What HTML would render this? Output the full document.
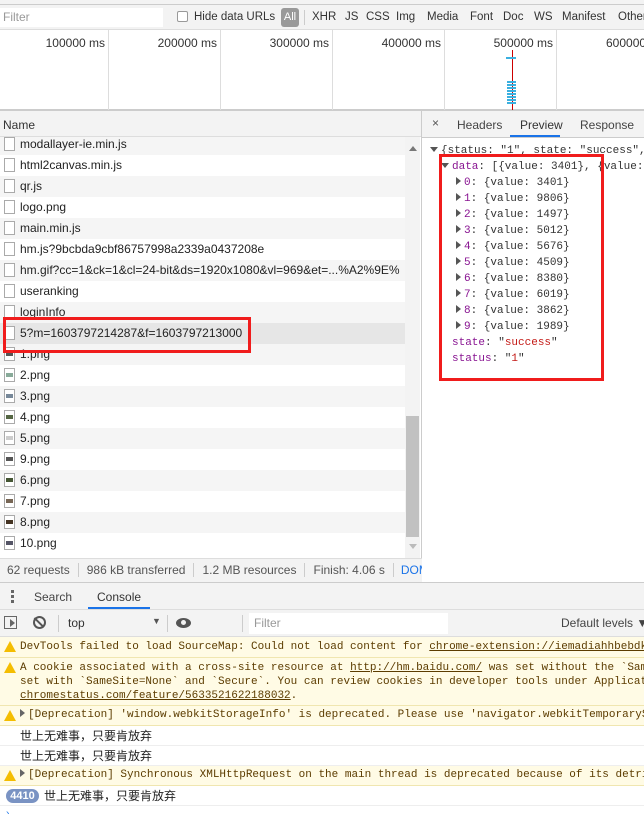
<!DOCTYPE html>
<html style="overflow:hidden"><head><meta charset="utf-8"><style>
*{box-sizing:border-box;margin:0;padding:0}
body{width:644px;height:814px;overflow:hidden;background:#fff;font-family:"Liberation Sans","Noto Sans CJK SC",sans-serif;font-size:12px;color:#333;position:relative}
.a{position:absolute}
.mono{font-family:"Liberation Mono","Noto Sans CJK SC",monospace;font-size:11px}
.row{position:absolute;left:0;width:405px;height:21px;line-height:21px;padding-left:20px;white-space:nowrap;overflow:hidden;font-size:12px;color:#222}
.row i{position:absolute;left:4px;top:3px;width:11px;height:14px;border:1px solid #aaa;background:#fff}
.row b{position:absolute;left:6px;top:8px;width:7px;height:4px;background:#555}
.g{background:#f5f5f5}
.jl{position:absolute;left:0;height:16px;line-height:16px;white-space:nowrap}
.pu{color:#881391}.rd{color:#c41a16}
.tri{display:inline-block;width:0;height:0;border-left:5px solid #555;border-top:4px solid transparent;border-bottom:4px solid transparent;margin-right:3px}
.trd{display:inline-block;width:0;height:0;border-top:5px solid #555;border-left:4px solid transparent;border-right:4px solid transparent;margin-right:3px;vertical-align:1px}
.msg{position:absolute;left:0;width:644px;border-bottom:1px solid #f0e6b0;background:#fffbe5;color:#5c3c00;padding-left:20px;white-space:nowrap;overflow:hidden;line-height:14px;padding-top:3px}
.warn{position:absolute;left:4px;top:4px;width:0;height:0;border-left:6px solid transparent;border-right:6px solid transparent;border-bottom:11px solid #f4bd00}
.log{position:absolute;left:0;width:644px;height:20px;line-height:20px;border-bottom:1px solid #eee;padding-left:20px;font-size:12px;color:#222}
.ft{position:absolute;top:8px;line-height:19px;white-space:nowrap;font-size:11.5px}
u{text-decoration:underline}
</style></head><body>
<div class="a" style="left:0;top:0;width:644px;height:5px;background:#f3f3f3;border-bottom:1px solid #ccc"></div>
<div class="a" style="left:0;top:5px;width:644px;height:25px;background:#f3f3f3;border-bottom:1px solid #ddd;overflow:hidden">
<div class="a" style="left:0;top:3px;width:163px;height:19px;background:#fff;color:#999;padding-left:3px;line-height:19px">Filter</div>
</div>
<div class="a" style="left:177px;top:11px;width:11px;height:11px;border:1px solid #999;border-radius:2px;background:#fff"></div>
<div class="ft" style="left:194px">Hide data URLs</div>
<div class="a" style="left:281px;top:8px;width:18px;height:19px;background:#999;border-radius:3px;color:#fff;line-height:19px;text-align:center;font-size:11px">All</div>
<div class="a" style="left:304px;top:10px;width:1px;height:15px;background:#ccc"></div>
<div class="ft" style="left:312px">XHR</div>
<div class="ft" style="left:345px">JS</div>
<div class="ft" style="left:366px">CSS</div>
<div class="ft" style="left:396px">Img</div>
<div class="ft" style="left:427px">Media</div>
<div class="ft" style="left:470px">Font</div>
<div class="ft" style="left:503px">Doc</div>
<div class="ft" style="left:534px">WS</div>
<div class="ft" style="left:562px">Manifest</div>
<div class="ft" style="left:618px">Other</div>
<div class="a" style="left:0;top:30px;width:644px;height:81px;background:#fff;border-bottom:2px solid #ccc"></div>
<div class="a" style="left:108px;top:30px;width:1px;height:80px;background:#ddd"></div>
<div class="a" style="left:220px;top:30px;width:1px;height:80px;background:#ddd"></div>
<div class="a" style="left:332px;top:30px;width:1px;height:80px;background:#ddd"></div>
<div class="a" style="left:444px;top:30px;width:1px;height:80px;background:#ddd"></div>
<div class="a" style="left:556px;top:30px;width:1px;height:80px;background:#ddd"></div>
<div class="a" style="left:0;top:36px;width:105px;text-align:right">100000 ms</div>
<div class="a" style="left:112px;top:36px;width:105px;text-align:right">200000 ms</div>
<div class="a" style="left:224px;top:36px;width:105px;text-align:right">300000 ms</div>
<div class="a" style="left:336px;top:36px;width:105px;text-align:right">400000 ms</div>
<div class="a" style="left:448px;top:36px;width:105px;text-align:right">500000 ms</div>
<div class="a" style="left:606px;top:36px;white-space:nowrap">600000 ms</div>
<div class="a" style="left:512px;top:50px;width:1px;height:60px;background:#c00"></div>
<div class="a" style="left:506px;top:57px;width:10px;height:2px;background:#3ab0e0"></div>
<div class="a" style="left:507px;top:81px;width:9px;height:23px;background:repeating-linear-gradient(#3ab0e0 0 2px,transparent 2px 3px)"></div>
<div class="a" style="left:0;top:111px;width:422px;height:26px;background:#f3f3f3;border-bottom:1px solid #ddd;line-height:28px;padding-left:3px">Name</div>
<div class="a" style="left:0;top:137px;width:422px;height:421px;overflow:hidden;background:#fff">
 <div class="row g" style="top:-3px"><i></i>modallayer-ie.min.js</div>
 <div class="row" style="top:18px"><i></i>html2canvas.min.js</div>
 <div class="row g" style="top:39px"><i></i>qr.js</div>
 <div class="row" style="top:60px"><i></i>logo.png</div>
 <div class="row g" style="top:81px"><i></i>main.min.js</div>
 <div class="row" style="top:102px"><i></i>hm.js?9bcbda9cbf86757998a2339a0437208e</div>
 <div class="row g" style="top:123px"><i></i>hm.gif?cc=1&amp;ck=1&amp;cl=24-bit&amp;ds=1920x1080&amp;vl=969&amp;et=...%A2%9E%</div>
 <div class="row" style="top:144px"><i></i>useranking</div>
 <div class="row g" style="top:165px"><i></i>loginInfo</div>
 <div class="row" style="top:186px;background:#e6e6e6"><i></i>5?m=1603797214287&amp;f=1603797213000</div>
 <div class="row g" style="top:207px"><i></i><b></b>1.png</div>
 <div class="row" style="top:228px"><i></i><b style="background:#8a9"></b>2.png</div>
 <div class="row g" style="top:249px"><i></i><b style="background:#789"></b>3.png</div>
 <div class="row" style="top:270px"><i></i><b style="background:#564"></b>4.png</div>
 <div class="row g" style="top:291px"><i></i><b style="background:#ccc"></b>5.png</div>
 <div class="row" style="top:312px"><i></i><b></b>9.png</div>
 <div class="row g" style="top:333px"><i></i><b style="background:#453"></b>6.png</div>
 <div class="row" style="top:354px"><i></i><b style="background:#765"></b>7.png</div>
 <div class="row g" style="top:375px"><i></i><b style="background:#432"></b>8.png</div>
 <div class="row" style="top:396px"><i></i><b style="background:#556"></b>10.png</div>
 <div class="a" style="left:405px;top:0;width:15px;height:421px;background:#f3f3f3"></div>
 <div class="a" style="left:409px;top:9px;border-bottom:5px solid #777;border-left:4px solid transparent;border-right:4px solid transparent"></div>
 <div class="a" style="left:406px;top:279px;width:13px;height:121px;background:#c1c1c1"></div>
 <div class="a" style="left:409px;top:407px;border-top:5px solid #bbb;border-left:4px solid transparent;border-right:4px solid transparent"></div>
</div>
<div class="a" style="left:421px;top:111px;width:1px;height:471px;background:#ccc"></div>
<div class="a" style="left:3px;top:317px;width:248px;height:36px;border:3px solid #f01c1c"></div>
<div class="a" style="left:0;top:558px;width:422px;height:24px;background:#f3f3f3;border-top:1px solid #ddd;line-height:22px;white-space:nowrap;overflow:hidden;color:#555">
<span style="padding:0 8px 0 7px;border-right:1px solid #ccc">62 requests</span><span style="padding:0 8px;border-right:1px solid #ccc">986 kB transferred</span><span style="padding:0 8px;border-right:1px solid #ccc">1.2 MB resources</span><span style="padding:0 8px;border-right:1px solid #ccc">Finish: 4.06 s</span><span style="padding:0 7px;color:#1a73e8">DOMContentLoaded</span></div>
<div class="a" style="left:422px;top:111px;width:222px;height:27px;background:#f3f3f3;border-bottom:1px solid #ccc"></div>
<div class="a" style="left:432px;top:116px;color:#555">×</div>
<div class="a" style="left:457px;top:118px;color:#444">Headers</div>
<div class="a" style="left:520px;top:118px;color:#333">Preview</div>
<div class="a" style="left:510px;top:135px;width:50px;height:2px;background:#1a73e8"></div>
<div class="a" style="left:580px;top:118px;color:#444">Response</div>
<div class="a mono" style="left:430px;top:143px;width:214px;height:240px;overflow:hidden">
 <div class="jl" style="top:0"><span class="trd"></span>{status: "1", state: "success", data: […]}</div>
 <div class="jl" style="top:16px;left:11px"><span class="trd"></span><span class="pu">data</span>: [{value: 3401}, {value: 9806},…]</div>
 <div class="jl" style="top:32px;left:26px"><span class="tri"></span><span class="pu">0</span>: {value: 3401}</div>
 <div class="jl" style="top:48px;left:26px"><span class="tri"></span><span class="pu">1</span>: {value: 9806}</div>
 <div class="jl" style="top:64px;left:26px"><span class="tri"></span><span class="pu">2</span>: {value: 1497}</div>
 <div class="jl" style="top:80px;left:26px"><span class="tri"></span><span class="pu">3</span>: {value: 5012}</div>
 <div class="jl" style="top:96px;left:26px"><span class="tri"></span><span class="pu">4</span>: {value: 5676}</div>
 <div class="jl" style="top:112px;left:26px"><span class="tri"></span><span class="pu">5</span>: {value: 4509}</div>
 <div class="jl" style="top:128px;left:26px"><span class="tri"></span><span class="pu">6</span>: {value: 8380}</div>
 <div class="jl" style="top:144px;left:26px"><span class="tri"></span><span class="pu">7</span>: {value: 6019}</div>
 <div class="jl" style="top:160px;left:26px"><span class="tri"></span><span class="pu">8</span>: {value: 3862}</div>
 <div class="jl" style="top:176px;left:26px"><span class="tri"></span><span class="pu">9</span>: {value: 1989}</div>
 <div class="jl" style="top:192px;left:22px"><span class="pu">state</span>: "<span class="rd">success</span>"</div>
 <div class="jl" style="top:208px;left:22px"><span class="pu">status</span>: "<span class="rd">1</span>"</div>
</div>
<div class="a" style="left:439px;top:154px;width:165px;height:227px;border:3px solid #f01c1c"></div>
<div class="a" style="left:0;top:582px;width:644px;height:28px;background:#f3f3f3;border-top:1px solid #ccc;border-bottom:1px solid #ddd"></div>
<div class="a" style="left:11px;top:590px;width:3px;height:3px;background:#666;box-shadow:0 5px #666,0 10px #666"></div>
<div class="a" style="left:34px;top:590px;color:#444">Search</div>
<div class="a" style="left:97px;top:590px;color:#333">Console</div>
<div class="a" style="left:88px;top:607px;width:62px;height:2px;background:#1a73e8"></div>
<div class="a" style="left:0;top:610px;width:644px;height:27px;background:#f3f3f3;border-bottom:1px solid #ddd"></div>
<div class="a" style="left:4px;top:616px;width:13px;height:13px;border:1px solid #666"></div>
<div class="a" style="left:10px;top:619px;border-left:5px solid #666;border-top:4px solid transparent;border-bottom:4px solid transparent"></div>
<div class="a" style="left:33px;top:616px;width:13px;height:13px;border:2px solid #555;border-radius:50%"></div>
<div class="a" style="left:38px;top:616px;width:2px;height:13px;background:#555;transform:rotate(-45deg)"></div>
<div class="a" style="left:58px;top:615px;width:1px;height:17px;background:#ccc"></div>
<div class="a" style="left:68px;top:616px;color:#333">top</div>
<div class="a" style="left:152px;top:616px;font-size:9px;color:#555">▼</div>
<div class="a" style="left:167px;top:615px;width:1px;height:17px;background:#ccc"></div>
<div class="a" style="left:176px;top:618px;width:15px;height:10px;background:#555;border-radius:50%"></div>
<div class="a" style="left:181px;top:620px;width:5px;height:5px;background:#f3f3f3;border-radius:50%"></div>
<div class="a" style="left:242px;top:615px;width:1px;height:17px;background:#ccc"></div>
<div class="a" style="left:249px;top:613px;width:199px;height:21px;background:#fff;color:#999;padding-left:5px;line-height:21px">Filter</div>
<div class="a" style="left:561px;top:616px;color:#444;white-space:nowrap;width:83px;overflow:hidden">Default levels ▼</div>
<div class="msg mono" style="top:637px;height:21px"><span class="warn"></span>DevTools failed to load SourceMap: Could not load content for <u>chrome-extension://iemadiahhbebdk</u></div>
<div class="msg mono" style="top:658px;height:48px"><span class="warn"></span>A cookie associated with a cross-site resource at <u>http://hm.baidu.com/</u> was set without the `SameSite`<br>set with `SameSite=None` and `Secure`. You can review cookies in developer tools under Application<br><u>chromestatus.com/feature/5633521622188032</u>.</div>
<div class="msg mono" style="top:706px;height:20px;padding-top:2px"><span class="warn"></span><span class="tri" style="border-left-color:#666"></span>[Deprecation] 'window.webkitStorageInfo' is deprecated. Please use 'navigator.webkitTemporaryStorage'</div>
<div class="log" style="top:726px">世上无难事，只要肯放弃</div>
<div class="log" style="top:746px">世上无难事，只要肯放弃</div>
<div class="msg mono" style="top:766px;height:20px;padding-top:2px"><span class="warn"></span><span class="tri" style="border-left-color:#666"></span>[Deprecation] Synchronous XMLHttpRequest on the main thread is deprecated because of its detrimental</div>
<div class="log" style="top:786px;padding-left:44px"><span class="a" style="left:6px;top:3px;width:33px;height:14px;border-radius:7px;background:#7a93c3;color:#fff;font-size:11px;font-weight:bold;line-height:14px;text-align:center">4410</span>世上无难事，只要肯放弃</div>
<div class="a" style="left:6px;top:808px;color:#1a73e8;font-size:10px">›</div>
</body></html>
